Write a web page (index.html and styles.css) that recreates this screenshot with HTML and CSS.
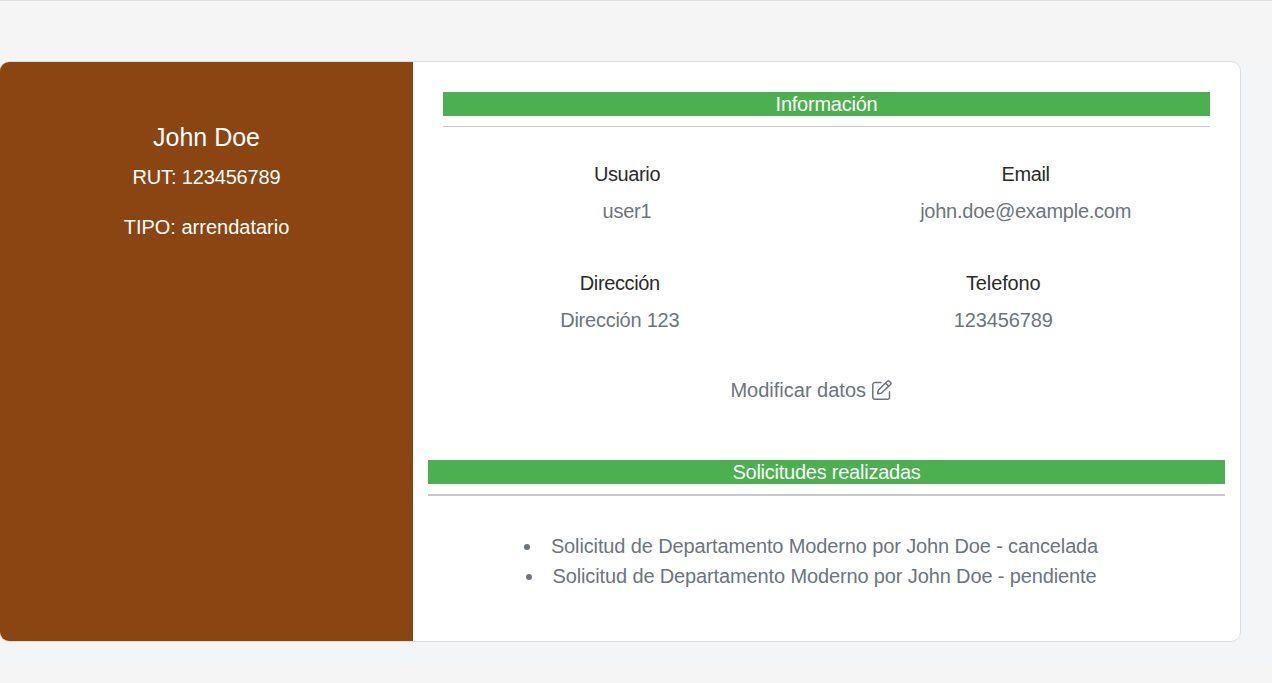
FILE: index.html
```html
<!DOCTYPE html>
<html lang="es">
<head>
<meta charset="utf-8">
<title>Perfil</title>
<link rel="stylesheet" href="styles.css">
</head>
<body>
<div class="stage">
<main class="card">
  <aside class="profile">
    <h1 class="name">John Doe</h1>
    <p class="meta rut">RUT: 123456789</p>
    <p class="meta">TIPO: arrendatario</p>
  </aside>
  <section class="details">
    <div class="info">
      <h2 class="bar">Información</h2>
      <div class="rule"></div>
      <div class="row row-account">
        <div class="field"><h3>Usuario</h3><p>user1</p></div>
        <div class="field"><h3>Email</h3><p>john.doe@example.com</p></div>
      </div>
      <div class="row row-contact">
        <div class="field"><h3>Dirección</h3><p>Dirección 123</p></div>
        <div class="field phone"><h3>Telefono</h3><p>123456789</p></div>
      </div>
      <a class="edit">Modificar datos
        <svg class="icon" viewBox="0 0 20 20" fill="none" stroke="currentColor" stroke-width="1.5" stroke-linejoin="round" stroke-linecap="round"><path d="M9 2.6H2.8A2 2 0 0 0 .8 4.6V17.2A2 2 0 0 0 2.8 19.2h12.7a2 2 0 0 0 2-2v-5.4"/><path d="M5.6 13.7l.6-3.4L15.4 1.3a1.5 1.5 0 0 1 2 0l1.2 1.2a1.5 1.5 0 0 1 0 2L9.2 13.3zM13.6 3.1l3.2 3.2"/></svg></a>
    </div>
    <h2 class="bar">Solicitudes realizadas</h2>
    <div class="rule thick"></div>
    <ul class="requests">
      <li>Solicitud de Departamento Moderno por John Doe - cancelada</li>
      <li>Solicitud de Departamento Moderno por John Doe - pendiente</li>
    </ul>
  </section>
</main>
</div>
</body>
</html>
```
FILE: styles.css
```css
* { box-sizing: border-box; margin: 0; padding: 0; }
body {
  background: #f5f5f5;
  border-top: 1px solid #dee2e6;
  height: 683px;
  padding-top: 60px;
  font: 20px/30px "Liberation Sans", Arial, sans-serif;
  color: #6c757d;
  text-align: center;
  overflow: hidden;
}
.stage { height: 603px; background: #f3f5f7; }
.card {
  display: flex;
  width: 1242px;
  height: 581px;
  margin-left: -1px;
  border: 1px solid #dcdcdc;
  border-radius: 10px;
  background: #fff;
  overflow: hidden;
}
.profile {
  width: 413px;
  padding-top: 60px;
  background: #8b4513;
  color: #fff;
}
.name { font-size: 25px; font-weight: 400; margin-bottom: 10px; }
.meta { margin-bottom: 20px; }
.rut { letter-spacing: -0.15px; }
.details { flex: 1; padding: 30px 15px 0; }
.info { padding: 0 15px; height: 368px; }
.bar {
  height: 24px;
  background: #4caf50;
  color: #fff;
  font-size: 20px;
  font-weight: 400;
  line-height: 24px;
  letter-spacing: -0.24px;
}
.rule { height: 1px; margin-top: 10px; background: #c8c8c8; }
.rule.thick { height: 2px; }
.row { display: flex; }
.field { letter-spacing: -0.25px; }
.field h3 { color: #2b2b2b; font-size: 20px; font-weight: 400; line-height: 24px; margin-bottom: 10px; letter-spacing: -0.38px; }
.row-account { justify-content: center; gap: 260px; padding: 35px 0 0 72px; }
.row-contact { margin: 0 15px 0 -15px; padding-top: 45px; }
.row-contact .field { width: 50%; }
.field.phone, .field.phone h3 { letter-spacing: -0.12px; }
.edit { display: block; margin-top: 40px; padding-right: 31px; }
.icon { width: 20px; height: 20px; vertical-align: -3px; }
.requests { list-style-position: inside; padding: 35px 31px 0 0; letter-spacing: -0.13px; }
```
